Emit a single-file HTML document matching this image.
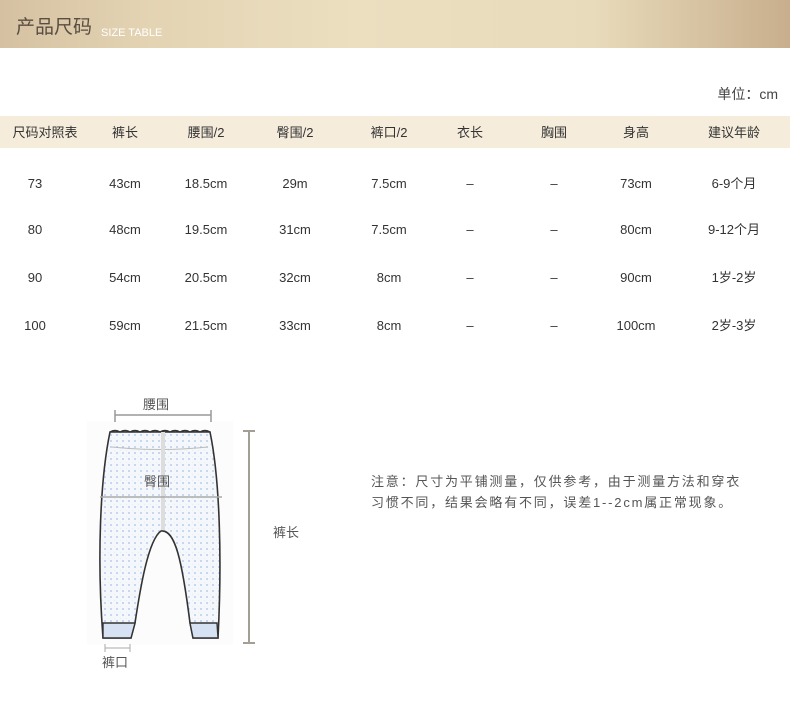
<!DOCTYPE html>
<html><head><meta charset="utf-8"><style>
*{margin:0;padding:0}
body{width:790px;height:717px;background:#fff;position:relative;overflow:hidden;font-family:"Liberation Sans","Noto Sans CJK SC",sans-serif;color:#333}
.hd{position:absolute;left:0;top:0;width:790px;height:48px;background:linear-gradient(90deg,#d5c1a1 0%,#e3d3b2 18%,#ebdfc0 45%,#e8dbbb 75%,#c8ae8c 100%)}
.hd .t{position:absolute;left:16px;top:16px;font-size:19px;line-height:24px;color:#5a4e42}
.hd .s{position:absolute;left:101px;top:26px;font-size:11px;line-height:14px;color:#fff}
.unit{position:absolute;right:12px;top:85px;font-size:14px;line-height:18px;color:#444}
.th{position:absolute;left:0;top:116px;width:790px;height:32px;background:#f5ecdc}
.c{position:absolute;font-size:13px;line-height:16px;height:16px;transform:translateX(-50%);white-space:nowrap;color:#333}
.note{position:absolute;left:371px;top:471px;font-size:13px;color:#555;line-height:21px;letter-spacing:1.8px}
</style></head><body>
<div class="hd"><span class="t">产品尺码</span><span class="s">SIZE TABLE</span></div>
<div class="unit">单位：cm</div>
<div class="th"></div>
<div class="c" style="left:45px;top:125px">尺码对照表</div>
<div class="c" style="left:125px;top:125px">裤长</div>
<div class="c" style="left:206px;top:125px">腰围/2</div>
<div class="c" style="left:295px;top:125px">臀围/2</div>
<div class="c" style="left:389px;top:125px">裤口/2</div>
<div class="c" style="left:470px;top:125px">衣长</div>
<div class="c" style="left:554px;top:125px">胸围</div>
<div class="c" style="left:636px;top:125px">身高</div>
<div class="c" style="left:734px;top:125px">建议年龄</div>

<div class="c" style="left:35px;top:176px">73</div><div class="c" style="left:125px;top:176px">43cm</div><div class="c" style="left:206px;top:176px">18.5cm</div><div class="c" style="left:295px;top:176px">29m</div><div class="c" style="left:389px;top:176px">7.5cm</div><div class="c" style="left:470px;top:176px">–</div><div class="c" style="left:554px;top:176px">–</div><div class="c" style="left:636px;top:176px">73cm</div><div class="c" style="left:734px;top:176px">6-9个月</div>
<div class="c" style="left:35px;top:222px">80</div><div class="c" style="left:125px;top:222px">48cm</div><div class="c" style="left:206px;top:222px">19.5cm</div><div class="c" style="left:295px;top:222px">31cm</div><div class="c" style="left:389px;top:222px">7.5cm</div><div class="c" style="left:470px;top:222px">–</div><div class="c" style="left:554px;top:222px">–</div><div class="c" style="left:636px;top:222px">80cm</div><div class="c" style="left:734px;top:222px">9-12个月</div>
<div class="c" style="left:35px;top:270px">90</div><div class="c" style="left:125px;top:270px">54cm</div><div class="c" style="left:206px;top:270px">20.5cm</div><div class="c" style="left:295px;top:270px">32cm</div><div class="c" style="left:389px;top:270px">8cm</div><div class="c" style="left:470px;top:270px">–</div><div class="c" style="left:554px;top:270px">–</div><div class="c" style="left:636px;top:270px">90cm</div><div class="c" style="left:734px;top:270px">1岁-2岁</div>
<div class="c" style="left:35px;top:318px">100</div><div class="c" style="left:125px;top:318px">59cm</div><div class="c" style="left:206px;top:318px">21.5cm</div><div class="c" style="left:295px;top:318px">33cm</div><div class="c" style="left:389px;top:318px">8cm</div><div class="c" style="left:470px;top:318px">–</div><div class="c" style="left:554px;top:318px">–</div><div class="c" style="left:636px;top:318px">100cm</div><div class="c" style="left:734px;top:318px">2岁-3岁</div>

<svg style="position:absolute;left:0;top:0" width="790" height="717">
<defs><pattern id="d" width="6" height="6" patternUnits="userSpaceOnUse"><rect width="6" height="6" fill="#f4f7fc"/><circle cx="3" cy="3" r="0.9" fill="#a9c0e6"/><circle cx="0" cy="0" r="0.7" fill="#e8dca0"/></pattern></defs>
<rect x="87" y="421" width="146" height="224" fill="#fcfcfc"/>
<path d="M110,432 C100,480 97,560 103,638 L131,638 L135,623 C140,590 148,540 161,531 C175,529 182,560 190,623 L193,638 L218,638 C222,560 220,480 210,432 Z" fill="url(#d)" stroke="#333" stroke-width="1.6"/>
<path d="M103,623 L135,623 L131,638 L103,638 Z M190,623 L217,623 L218,638 L193,638 Z" fill="#d6e2f4" stroke="#333" stroke-width="1.4"/>
<path d="M110,432 Q115,429 120,432 Q125,429 130,432 Q135,429 140,432 Q145,429 150,432 Q155,429 160,432 Q165,429 170,432 Q175,429 180,432 Q185,429 190,432 Q195,429 200,432 Q205,429 210,432" fill="none" stroke="#333" stroke-width="1.4"/>
<path d="M112,447 Q160,452 208,447" fill="none" stroke="#bbb" stroke-width="1"/>
<rect x="161" y="432" width="4" height="98" fill="#ddd"/>
<line x1="100" y1="497" x2="222" y2="497" stroke="#aaa" stroke-width="1.5"/>
<g stroke="#999" stroke-width="1.5"><line x1="115" y1="415" x2="211" y2="415"/><line x1="115" y1="410" x2="115" y2="422"/><line x1="211" y1="410" x2="211" y2="422"/></g>
<g stroke="#a59e94" stroke-width="2"><line x1="249" y1="431" x2="249" y2="643"/><line x1="243" y1="431" x2="255" y2="431"/><line x1="243" y1="643" x2="255" y2="643"/></g>
<g stroke="#aaa" stroke-width="1"><line x1="105" y1="648" x2="130" y2="648"/><line x1="105" y1="644" x2="105" y2="652"/><line x1="130" y1="644" x2="130" y2="652"/></g>
<text x="143" y="409" font-size="13" fill="#555" font-family="Liberation Sans,Noto Sans CJK SC,sans-serif">腰围</text>
<text x="144" y="486" font-size="13" fill="#555" font-family="Liberation Sans,Noto Sans CJK SC,sans-serif">臀围</text>
<text x="273" y="537" font-size="13" fill="#555" font-family="Liberation Sans,Noto Sans CJK SC,sans-serif">裤长</text>
<text x="102" y="667" font-size="13" fill="#555" font-family="Liberation Sans,Noto Sans CJK SC,sans-serif">裤口</text>
</svg>
<div class="note">注意：尺寸为平铺测量，仅供参考，由于测量方法和穿衣<br>习惯不同，结果会略有不同，误差1--2cm属正常现象。</div>
</body></html>
